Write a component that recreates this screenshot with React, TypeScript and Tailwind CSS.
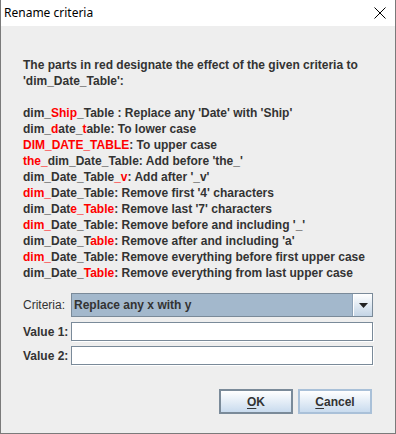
import React from "react";

const R = ({ children }: { children: React.ReactNode }) => (
  <span className="text-[#ff0000]">{children}</span>
);

export default function App() {
  const lines: React.ReactNode[] = [
    <>dim_<R>Ship</R>_Table : Replace any 'Date' with 'Ship'</>,
    <>dim_<R>d</R>ate_<R>t</R>able: To lower case</>,
    <><R>DIM_DATE_TABLE</R>: To upper case</>,
    <><R>the_</R>dim_Date_Table: Add before 'the_'</>,
    <>dim_Date_Table<R>_v</R>: Add after '_v'</>,
    <><R>dim_</R>Date_Table: Remove first '4' characters</>,
    <>dim_Dat<R>e_Table</R>: Remove last '7' characters</>,
    <><R>dim_</R>Date_Table: Remove before and including '_'</>,
    <>dim_Date_T<R>able</R>: Remove after and including 'a'</>,
    <><R>dim_</R>Date_Table: Remove everything before first upper case</>,
    <>dim_Date_<R>Table</R>: Remove everything from last upper case</>,
  ];
  return (
    <div className="w-[396px] h-[434px] flex flex-col bg-[#eeeeee] border-l border-r border-b border-[#7a7a7a] overflow-hidden">
      <div className="h-[26px] bg-white flex items-center justify-between shrink-0">
        <span className="pl-[3px] text-[12px] text-black" style={{ fontFamily: "'Noto Sans', 'Liberation Sans', sans-serif" }}>
          Rename criteria
        </span>
        <svg width="12" height="12" viewBox="0 0 12 12" className="mr-[9px]">
          <path d="M0.5 0.5 L11.5 11.5 M11.5 0.5 L0.5 11.5" stroke="#000" strokeWidth="1" fill="none" />
        </svg>
      </div>
      <div
        className="flex flex-col flex-1 px-[22px] pt-[31px] text-[12px] font-bold text-[#333333]"
        style={{ fontFamily: "'Liberation Sans', Arial, sans-serif" }}
      >
        <div className="leading-[16px]">
          <div>The parts in red designate the effect of the given criteria to</div>
          <div>'dim_Date_Table':</div>
          <div>&nbsp;</div>
          {lines.map((l, i) => (
            <div key={i}>{l}</div>
          ))}
        </div>
        <div className="mt-[12px] flex flex-col gap-[5px]">
          <div className="flex items-center">
            <span className="w-[48px] font-normal">Criteria:</span>
            <div className="flex-1 h-[24px] flex border border-[#7a8a99] bg-[#a3b8cc]">
              <div className="flex-1 flex items-center pl-[2px] border-r border-[#8da2b7]">Replace any x with y</div>
              <div className="w-[19px] flex items-center justify-center bg-gradient-to-b from-white to-[#c4d5e6] border-l border-white">
                <svg width="9" height="5" viewBox="0 0 9 5">
                  <path d="M0 0 H9 L4.5 5 Z" fill="#222" />
                </svg>
              </div>
            </div>
          </div>
          <div className="flex items-center">
            <span className="w-[48px]">Value 1:</span>
            <div className="flex-1 h-[19px] bg-white border border-[#7a8a99] shadow-[1px_1px_0_#ffffff]" />
          </div>
          <div className="flex items-center">
            <span className="w-[48px]">Value 2:</span>
            <div className="flex-1 h-[19px] bg-white border border-[#7a8a99] shadow-[1px_1px_0_#ffffff]" />
          </div>
        </div>
        <div className="mt-[24px] flex justify-end gap-[5px] pr-[1px]">
          <button className="w-[74px] h-[25px] border-2 border-[#7a8a99] bg-gradient-to-b from-white to-[#c9dbee] text-[#333333] font-bold text-[12px]">
            <span className="underline underline-offset-2">O</span>K
          </button>
          <button className="w-[74px] h-[25px] border-2 border-[#a9c0d8] bg-gradient-to-b from-white to-[#c9dbee] text-[#333333] font-bold text-[12px]">
            <span className="underline underline-offset-2">C</span>ancel
          </button>
        </div>
      </div>
    </div>
  );
}
